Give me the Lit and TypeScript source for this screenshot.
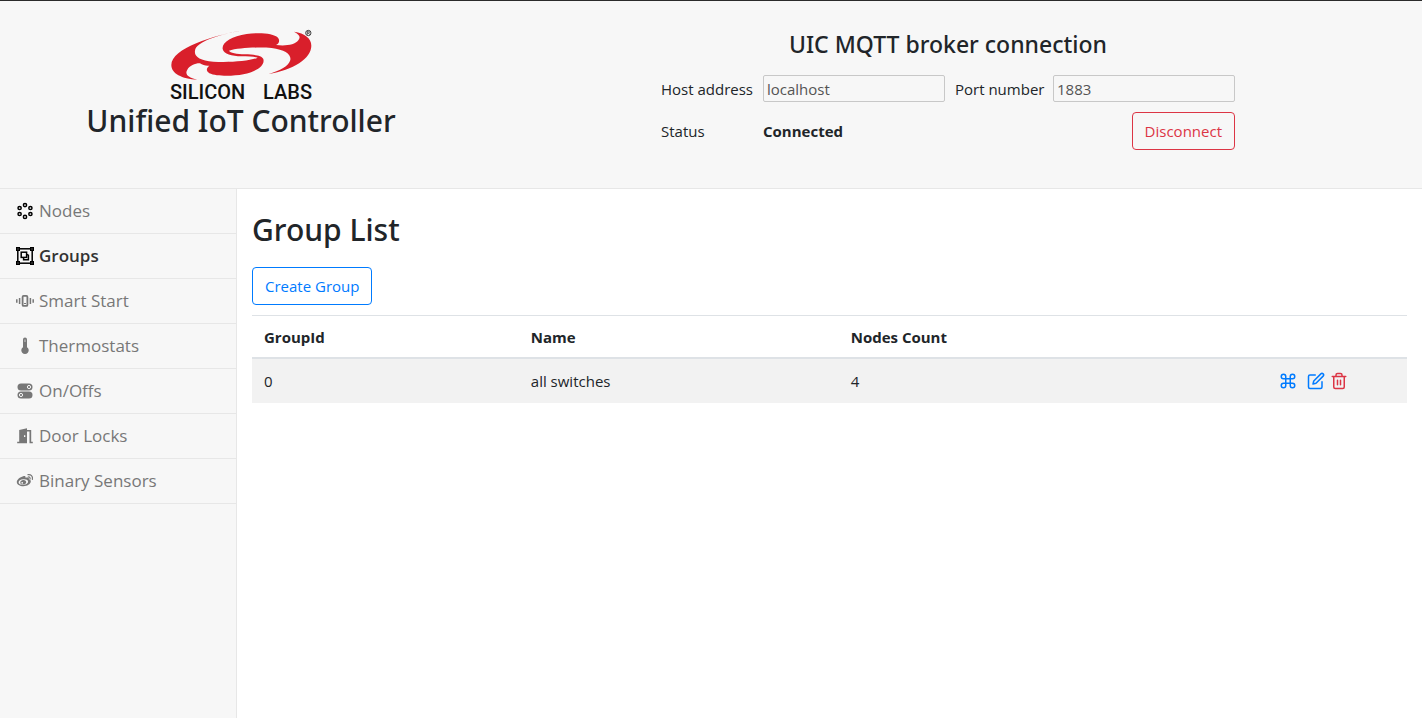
import { LitElement, html, css, svg } from "lit";
import { customElement, state } from "lit/decorators.js";

const navIcons: Record<string, unknown> = {
  nodes: svg`<g fill="none" stroke="#000" stroke-width="1.5">
    <circle cx="9" cy="3.1" r="1.6"/><circle cx="9" cy="14.9" r="1.6"/>
    <circle cx="3.6" cy="6" r="1.6"/><circle cx="14.4" cy="6" r="1.6"/>
    <circle cx="3.6" cy="12" r="1.6"/><circle cx="14.4" cy="12" r="1.6"/></g>`,
  groups: svg`<g fill="none" stroke="#000" stroke-width="1.5">
    <rect x="1.8" y="1.8" width="14.4" height="14.4"/>
    <rect x="5.2" y="5.2" width="5.4" height="5.2"/><path d="M12.4 7.8v5H7.6v-2.2M12.4 7.8h-1.8"/></g>
    <path fill="#000" d="M0 0h4v4H0zM14 0h4v4h-4zM0 14h4v4H0zM14 14h4v4h-4z"/>
    <path fill="#999" d="M1.5 1.5h1v1h-1zM15.5 1.5h1v1h-1zM1.5 15.5h1v1h-1zM15.5 15.5h1v1h-1z"/>`,
  smart: svg`<rect x="6.6" y="3.9" width="4.8" height="10" rx="1" fill="none" stroke="currentColor" stroke-width="1.8"/>
    <path d="M8 11h2v1H8z"/>
    <path fill="none" stroke="currentColor" stroke-width="1.5" d="M3.6 6v6M14.4 6v6"/>
    <path fill="none" stroke="currentColor" stroke-width="1.5" d="M.8 7.2v3.6M17.2 7.2v3.6"/>`,
  thermo: svg`<path d="M7 2.5a2 2 0 0 1 4 0v7.7a3.7 3.7 0 1 1-4 0z"/>
    <path fill="#ccc" d="M8.5 2.6h1V5h-1z"/>`,
  onoff: svg`<rect x="1.5" y="1.5" width="15" height="7" rx="3.5"/><rect x="1.5" y="9.5" width="15" height="7" rx="3.5"/>
    <circle cx="13" cy="5" r="1.6" fill="none" stroke="#f7f7f7" stroke-width="1"/>
    <circle cx="5" cy="13" r="1.6" fill="none" stroke="#f7f7f7" stroke-width="1"/>`,
  door: svg`<path fill-rule="evenodd" d="M3.2 3 11 1.2V16.2H1.2v-1.4h2zM8 8.2v1.9h1.3V8.2z"/>
    <path d="M11 3h4.2v11.8h1.6v1.4h-3.3V4.5H11z"/>`,
  sensor: svg`<path fill-rule="evenodd" d="M7.2 4.2c1.500-.6 2.700-.1 2.300 1.600 1.900-.7 3.900-.5 3.400 1.500 1.200.4 2 1.100 1.900 2.300-.2 2.600-3.700 4.700-7.300 4.700-3.800 0-6.700-1.800-6.700-4.300 0-2.200 3.200-5 6.400-5.800zM7.300 7.200c-2.800.2-4.800 1.600-4.700 3.300.1 1.600 2.300 2.600 4.900 2.400 2.700-.2 4.700-1.800 4.600-3.400-.1-1.600-2.200-2.500-4.800-2.300z"/>
    <path fill-rule="evenodd" d="M7.100 8c1.900-.2 3.300.8 3.100 2.300-.2 1.400-1.700 2.400-3.400 2.300-1.600-.1-2.700-1.100-2.500-2.400.2-1.200 1.400-2.100 2.800-2.200zM6.200 9.900a.9.9 0 1 0 0 1.800.9.9 0 0 0 0-1.800z"/>
    <path fill="none" stroke="currentColor" stroke-width="1.2" stroke-linecap="round" d="M12 2.700c2.900-.5 5 1.600 4.400 4.700M12.200 5c1.300-.2 2.100.6 1.900 1.900"/>`,
};

@customElement("app-root")
export class AppRoot extends LitElement {
  @state() private active = "Groups";

  private nav = [
    ["nodes", "Nodes"],
    ["groups", "Groups"],
    ["smart", "Smart Start"],
    ["thermo", "Thermostats"],
    ["onoff", "On/Offs"],
    ["door", "Door Locks"],
    ["sensor", "Binary Sensors"],
  ];

  private groups = [{ id: 0, name: "all switches", count: 4 }];

  static styles = css`
    :host {
      display: flex;
      flex-direction: column;
      min-height: 100vh;
      box-sizing: border-box;
      border-top: 1px solid #2b2b2b;
      font-family: "Open Sans", "Noto Sans", sans-serif;
      font-size: 15px;
      line-height: 24px;
      color: #212529;
      background: #fff;
    }
    * { box-sizing: border-box; }
    h1, h2 { margin: 0; font-family: "Noto Sans", "Open Sans", sans-serif; font-weight: 500; }
    header {
      display: grid;
      grid-template-columns: 1fr 2fr;
      background: #f7f7f7;
      border-bottom: 1px solid #e7e7e7;
      padding: 27px 0 38px;
    }
    .brand {
      display: flex;
      flex-direction: column;
      align-items: center;
      padding-left: 8px;
    }
    .brand svg { display: block; overflow: visible; }
    .brand text { font-family: Roboto, sans-serif; font-weight: 500; fill: #111; }
    .brand h1 { font-size: 30px; line-height: 32px; white-space: nowrap; }
    .broker { display: flex; flex-direction: column; align-items: center; }
    .broker h2 { font-size: 23px; line-height: 32px; margin-bottom: 15px; }
    .form {
      display: grid;
      grid-template-columns: 92px 182px 88px 182px;
      column-gap: 10px;
      row-gap: 10px;
      align-items: center;
    }
    .form label, .form span { white-space: nowrap; }
    .form strong { font-weight: 700; }
    input {
      width: 100%;
      height: 27px;
      padding: 1px 3px;
      border: 1px solid #c8c8c8;
      border-radius: 2px;
      background: #f7f7f7;
      font: inherit;
      color: #545454;
    }
    .btn {
      height: 38px;
      padding: 0 12px;
      border: 1px solid;
      border-radius: 4px;
      background: transparent;
      font: inherit;
      cursor: pointer;
    }
    .danger { color: #dc3545; }
    .primary { color: #007bff; }
    .form .btn { grid-column: 4; justify-self: end; }
    .body { flex: 1; display: grid; grid-template-columns: 1fr 5fr; }
    nav { background: #f7f7f7; border-right: 1px solid #e7e7e7; }
    nav a {
      display: flex;
      align-items: center;
      gap: 5px;
      height: 45px;
      padding: 0 16px;
      border-bottom: 1px solid #e7e7e7;
      font-size: 17px;
      color: #777;
      text-decoration: none;
      white-space: nowrap;
    }
    nav a.active { color: #333; font-weight: 600; }
    nav svg { flex: none; fill: currentColor; }
    main { padding: 21px 15px; min-width: 0; }
    main h2 { font-size: 30px; line-height: 40px; margin-bottom: 17px; }
    table {
      width: 100%;
      margin-top: 10px;
      border-collapse: separate;
      border-spacing: 0;
      table-layout: fixed;
    }
    th, td { text-align: left; padding: 10px 12px; }
    th {
      padding: 9px 12px 8px;
      border-top: 1px solid #dee2e6;
      border-bottom: 2px solid #dee2e6;
      font-weight: 700;
    }
    td { background: #f2f2f2; }
    .c-id { width: 23.1%; }
    .c-name { width: 27.7%; }
    .c-count { width: 37.1%; }
    .actions { display: flex; align-items: center; gap: 5px; height: 24px; }
    .icon {
      display: block;
      padding: 0;
      border: 0;
      background: none;
      height: 18px;
      cursor: pointer;
    }
    .icon.first { margin-right: 5px; }
    .icon svg { display: block; fill: none; stroke: currentColor; stroke-width: 2; stroke-linecap: round; stroke-linejoin: round; }
  `;

  private icon(label: string, cls: string, shape: unknown) {
    return html`<button class="icon ${cls}" aria-label=${label}>
      <svg width="18" height="18" viewBox="0 0 24 24">${shape}</svg>
    </button>`;
  }

  render() {
    return html`
      <header>
        <div class="brand">
          <svg width="144" height="77" viewBox="0 0 144 77" role="img" aria-label="Silicon Labs">
            <g transform="translate(-19 -13) scale(.33333)">
              <path fill="#d91f2b" d="M285 45C190 60 64 100 64 150C64 175 95 192 142 194C112 188 104 176 112 164C118 152 138 144 150 145C158 151 168 153 178 152C168 160 168 168 178 175C200 185 250 184 280 178C325 168 345 150 340 132C335 120 310 119 285 118C260 117 240 114 237 107C265 98 330 96 365 99C405 104 424 118 421 135C417 152 390 168 355 177C430 165 484 130 484 92C484 70 465 55 432 50C450 60 452 66 445 76C435 90 405 94 378 90C388 86 390 76 384 68C370 55 330 52 290 57C245 64 215 82 218 102C221 118 245 123 275 124C300 125 315 125 323 128C300 138 240 143 190 140C150 136 132 125 135 107C138 80 210 57 285 45Z"/>
              <circle cx="475" cy="54" r="8" fill="none" stroke="#444" stroke-width="3"/>
              <path fill="none" stroke="#444" stroke-width="2.5" d="M472 59V49h4a2.5 2.5 0 0 1 0 5h-4m3 0 4 5"/>
            </g>
            <text x="1" y="71" font-size="20">SILICON</text>
            <text x="94" y="71" font-size="20">LABS</text>
          </svg>
          <h1>Unified IoT Controller</h1>
        </div>
        <section class="broker">
          <h2>UIC MQTT broker connection</h2>
          <div class="form">
            <label for="host">Host address</label>
            <input id="host" .value=${"localhost"} />
            <label for="port">Port number</label>
            <input id="port" .value=${"1883"} />
            <span>Status</span>
            <strong>Connected</strong>
            <button class="btn danger">Disconnect</button>
          </div>
        </section>
      </header>
      <div class="body">
        <nav>
          ${this.nav.map(
            ([key, label]) => html`<a
              href="#"
              class=${label === this.active ? "active" : ""}
              @click=${(e: Event) => {
                e.preventDefault();
                this.active = label;
              }}
              ><svg width="18" height="18" viewBox="0 0 18 18">${navIcons[key]}</svg>${label}</a
            >`
          )}
        </nav>
        <main>
          <h2>Group List</h2>
          <button class="btn primary">Create Group</button>
          <table>
            <thead>
              <tr>
                <th class="c-id">GroupId</th>
                <th class="c-name">Name</th>
                <th class="c-count">Nodes Count</th>
                <th></th>
              </tr>
            </thead>
            <tbody>
              ${this.groups.map(
                (g) => html`<tr>
                  <td>${g.id}</td>
                  <td>${g.name}</td>
                  <td>${g.count}</td>
                  <td>
                    <div class="actions">
                      ${this.icon("Commands", "primary first", svg`<path d="M18 3a3 3 0 0 0-3 3v12a3 3 0 0 0 3 3 3 3 0 0 0 3-3 3 3 0 0 0-3-3H6a3 3 0 0 0-3 3 3 3 0 0 0 3 3 3 3 0 0 0 3-3V6a3 3 0 0 0-3-3 3 3 0 0 0-3 3 3 3 0 0 0 3 3h12a3 3 0 0 0 3-3 3 3 0 0 0-3-3z"/>`)}
                      ${this.icon("Edit", "primary", svg`<path d="M11 4H4a2 2 0 0 0-2 2v14a2 2 0 0 0 2 2h14a2 2 0 0 0 2-2v-7"/><path d="M18.5 2.5a2.121 2.121 0 0 1 3 3L12 15l-4 1 1-4 9.5-9.5z"/>`)}
                      ${this.icon("Delete", "danger", svg`<path d="M3 6h18M19 6v14a2 2 0 0 1-2 2H7a2 2 0 0 1-2-2V6m3 0V4a2 2 0 0 1 2-2h4a2 2 0 0 1 2 2v2M10 11v6M14 11v6"/>`)}
                    </div>
                  </td>
                </tr>`
              )}
            </tbody>
          </table>
        </main>
      </div>
    `;
  }
}
